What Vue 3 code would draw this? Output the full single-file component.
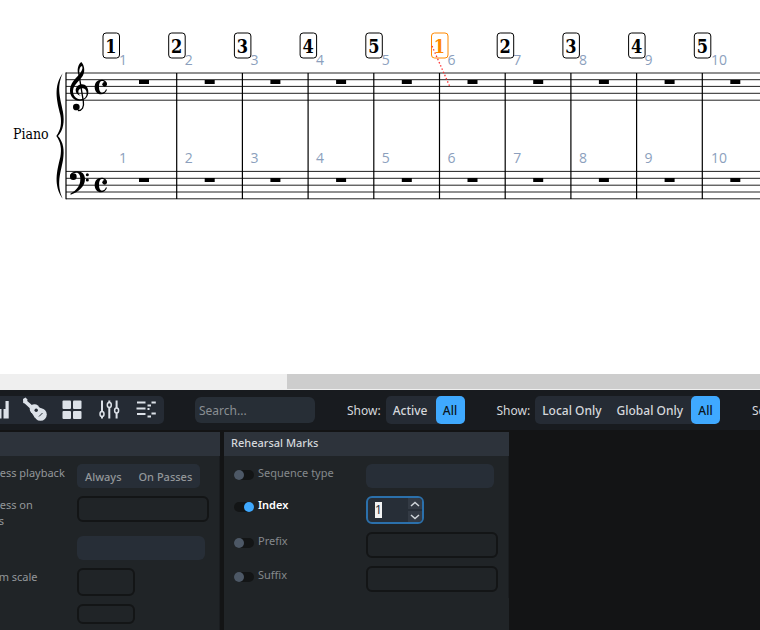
<script setup>
import { onMounted, ref } from 'vue'

const FIRST_BARLINE = 111
const BAR_WIDTH = 65.7

const trebleLines = [73, 79.7, 86.4, 93.3, 100.2]
const bassLines = [171.4, 178.3, 185.2, 192, 198.8]

const measures = Array.from({ length: 10 }, (_, i) => ({
  number: i + 1,
  mark: (i % 5) + 1,
  selected: i === 5,
  start: FIRST_BARLINE + i * BAR_WIDTH,
  center: 144 + i * BAR_WIDTH,
}))

const showActive = ref('All')
const showScope = ref('All')
const indexValue = ref('1')
const indexField = ref(null)

const properties = ref([
  { id: 'sequence', label: 'Sequence type', on: false, kind: 'select' },
  { id: 'index', label: 'Index', on: true, kind: 'number' },
  { id: 'prefix', label: 'Prefix', on: false, kind: 'text' },
  { id: 'suffix', label: 'Suffix', on: false, kind: 'text' },
])

function step(delta) {
  indexValue.value = String((Number(indexValue.value) || 0) + delta)
}

onMounted(() => {
  indexField.value?.[0]?.focus({ preventScroll: true })
  indexField.value?.[0]?.select()
})
</script>

<template>
  <main class="app">
    <section class="score" aria-label="Score">
      <svg class="staves" role="img" aria-label="Piano score">
        <g class="staff-line">
          <line v-for="y in [...trebleLines, ...bassLines]" :key="y" x1="66" x2="100%" :y1="y" :y2="y" />
        </g>
        <line class="barline" x1="66" x2="66" y1="72.5" y2="199.3" />

        <path
          transform="translate(0 20) scale(.33333)"
          d="M188 160C160 200 170 240 181 285C186 310 182 330 169 348C182 366 186 386 181 411C170 456 160 496 188 536C168 490 182 460 189 420C194 390 190 366 174 348C190 330 194 306 189 276C182 236 168 206 188 160Z"
        />
        <text class="instrument" x="13" y="139">Piano</text>

        <g transform="translate(50 60) scale(.33333)">
          <path
            d="M94 6C102 14 107 32 98 48C89 63 70 74 69 92C68 108 80 118 92 118C104 118 110 109 110 100C110 90 104 85 97 85C90 85 85 89 85 95C85 101 88 105 92 107C83 106 77 99 77 91C77 81 86 73 96 73C107 73 115 83 115 96C115 111 104 122 89 122C71 122 60 108 60 92C60 70 76 57 86 45C94 35 99 26 97 20C94 15 87 24 88 38L84 40C81 24 86 12 94 6Z"
          />
          <path class="stem" d="M86 38L100 124C103 142 96 152 84 152" />
          <circle cx="79" cy="141" r="10" />
        </g>
        <g transform="translate(50 150) scale(.33333)">
          <path
            d="M60 82C59 71 69 64 82 64C96 64 105 73 105 87C105 109 86 126 62 134L61 131C80 121 91 107 91 87C91 75 87 68 79 68C72 68 68 70 66 74Z"
          />
          <circle cx="70" cy="80" r="10" />
          <circle cx="112" cy="74" r="4.500" />
          <circle cx="112" cy="90" r="4.500" />
        </g>
        <g v-for="y in [60, 158]" :key="y" :transform="`translate(50 ${y}) scale(.33333)`">
          <path
            d="M171 89C168 97 162 103 153 103C142 103 134 94 134 81C134 68 142 59 154 59C164 59 171 65 171 73L165 68C162 63 158 62 155 63C149 64 147 71 147 81C147 91 150 98 156 98C162 98 166 94 168 88Z"
          />
          <circle cx="164" cy="73" r="7" />
        </g>

        <g v-for="m in measures" :key="m.number">
          <line v-if="m.number > 1" class="barline" :x1="m.start" :x2="m.start" y1="73" y2="199" />
          <rect :x="m.center - 5" y="80" width="10" height="4" />
          <rect :x="m.center - 5" y="178" width="10" height="4" />
          <g class="measure-number">
            <text :x="m.number === 10 ? 719 : m.center - 21" y="65">{{ m.number }}</text>
            <text :x="m.number === 10 ? 719 : m.center - 21" y="163">{{ m.number }}</text>
          </g>
          <g class="mark" :class="{ selected: m.selected }">
            <rect :x="m.start - 8" y="33" width="16.5" height="25" rx="3" />
            <text :x="m.start" y="53">{{ m.mark }}</text>
          </g>
        </g>
        <line class="attachment" x1="432" y1="46" x2="450" y2="87" />
      </svg>
    </section>

    <div class="scroll-track"><div class="scroll-thumb"></div></div>

    <header class="toolbar">
      <div class="group icons">
        <button type="button" aria-label="Keyboard">
          <svg viewBox="0 0 37 28"><path d="M16 13h6.500v9.500H16zM24.500 13H26.500V5h3.200v17.500H24.500z" /></svg>
        </button>
        <button type="button" aria-label="Fretboard">
          <svg viewBox="0 0 37 28">
            <path d="M7 3l2.500-1.500 2 2-.3 1.500 7 6-2.500 3-7-6.500-1.500-.5z" />
            <circle cx="18.500" cy="13" r="4.800" />
            <circle cx="24.500" cy="18.500" r="6.300" />
            <path d="M14 14l5 8 9-8-7-4z" />
            <circle class="cut" cx="20.200" cy="14.200" r="1.700" />
            <path class="cut-line" d="M23 20.500l3.500-3.500" />
          </svg>
        </button>
        <button type="button" aria-label="Drum pads">
          <svg viewBox="0 0 37 28">
            <rect x="9.500" y="4.500" width="8.500" height="8.500" rx="1" />
            <rect x="20" y="4.500" width="8.500" height="8.500" rx="1" />
            <rect x="9.500" y="15" width="8.500" height="8" rx="1" />
            <rect x="20" y="15" width="8.500" height="8" rx="1" />
          </svg>
        </button>
        <button type="button" aria-label="Mixer">
          <svg viewBox="0 0 37 28">
            <path class="wire" d="M12 4.500v18M19.300 4.500v18M26.600 4.500v18" />
            <ellipse class="knob" cx="12" cy="18" rx="2" ry="2.500" />
            <ellipse class="knob" cx="19.300" cy="9" rx="2" ry="2.500" />
            <ellipse class="knob" cx="26.600" cy="14.500" rx="2" ry="2.500" />
          </svg>
        </button>
        <button type="button" aria-label="Key editor">
          <svg viewBox="0 0 37 28">
            <path class="wire" d="M10 6.500h8.500M9.500 12.500h9M10 18h8.500M24.500 6.500h4.300M20.500 9.500h3.500M20.500 13h2M24.500 17.500h4.300M20.500 20.500h3.500" />
          </svg>
        </button>
      </div>

      <input class="search" type="search" placeholder="Search..." aria-label="Search" />

      <div class="filter">
        <span>Show:</span>
        <div class="group">
          <button
            v-for="o in ['Active', 'All']"
            :key="o"
            type="button"
            :class="{ on: showActive === o }"
            @click="showActive = o"
          >{{ o }}</button>
        </div>
      </div>
      <div class="filter">
        <span>Show:</span>
        <div class="group">
          <button
            v-for="o in ['Local Only', 'Global Only', 'All']"
            :key="o"
            type="button"
            :class="{ on: showScope === o }"
            @click="showScope = o"
          >{{ o }}</button>
        </div>
      </div>
      <div class="filter"><span>Scope:</span></div>
    </header>

    <div class="panels">
      <section class="panel scrolled">
        <h2></h2>
        <div class="body">
          <div class="row">
            <span></span>
            <span class="label">Suppress playback</span>
            <div class="group passes">
              <button type="button">Always</button>
              <button type="button">On Passes</button>
            </div>
          </div>
          <div class="row">
            <span></span>
            <label class="label narrow" for="passes">Suppress on passes</label>
            <input id="passes" class="field" type="text" />
          </div>
          <div class="row">
            <span></span>
            <span></span>
            <select class="field" aria-label="Type"></select>
          </div>
          <div class="row">
            <span></span>
            <label class="label" for="scale">Custom scale</label>
            <input id="scale" class="field short" type="text" />
          </div>
          <div class="row">
            <span></span>
            <span></span>
            <input class="field short low" type="text" aria-label="Value" />
          </div>
        </div>
      </section>

      <section class="panel">
        <h2>Rehearsal Marks</h2>
        <div class="body">
          <div v-for="p in properties" :key="p.id" class="row" :class="{ enabled: p.on }">
            <input v-model="p.on" class="toggle" type="checkbox" :aria-label="`Set ${p.label}`" />
            <label class="label" :for="p.id">{{ p.label }}</label>
            <select v-if="p.kind === 'select'" :id="p.id" class="field"></select>
            <div v-else-if="p.kind === 'number'" class="spin">
              <input :id="p.id" ref="indexField" v-model="indexValue" type="text" inputmode="numeric" />
              <div class="steps">
                <button type="button" aria-label="Increase" @click="step(1)">
                  <svg viewBox="0 0 10 6"><path d="M1 5L5 1.500l4 3.500" /></svg>
                </button>
                <button type="button" aria-label="Decrease" @click="step(-1)">
                  <svg viewBox="0 0 10 6"><path d="M1 1L5 4.500l4-3.500" /></svg>
                </button>
              </div>
            </div>
            <input v-else :id="p.id" class="field" type="text" />
          </div>
        </div>
      </section>
    </div>
  </main>
</template>

<style>
body {
  margin: 0;
  background: #131415;
}
</style>

<style scoped>
.app {
  display: flex;
  flex-direction: column;
  min-height: 100vh;
  overflow: hidden;
  background: #131415;
  color: #d5d8dc;
  font: 12px/16px "Noto Sans", "Open Sans", sans-serif;
}

button,
input,
select {
  box-sizing: border-box;
  margin: 0;
  padding: 0;
  border: 0;
  background: none;
  color: inherit;
  font: inherit;
  outline: none;
  appearance: none;
}

.score {
  background: #fff;
}

.staves {
  display: block;
  width: 100%;
  height: 374px;
  fill: #000;
}

.staff-line {
  stroke: #222;
  stroke-width: 1;
}

.barline {
  stroke: #000;
  stroke-width: 1.2;
}

.stem {
  fill: none;
  stroke: #000;
  stroke-width: 4;
}

.instrument {
  font: 14px "DejaVu Serif Condensed", "DejaVu Serif", serif;
}

.measure-number {
  fill: #8c9fbd;
  font: 14px "Open Sans", sans-serif;
  text-anchor: middle;
}

.mark {
  font: bold 18px "DejaVu Serif Condensed", "DejaVu Serif", serif;
  text-anchor: middle;
}

.mark rect {
  fill: none;
  stroke: #000;
}

.mark.selected {
  fill: #ff8800;
}

.mark.selected rect {
  stroke: #ff8800;
}

.attachment {
  stroke: #f33;
  stroke-width: 1.3;
  stroke-dasharray: 1.5 2;
}

.scroll-track {
  height: 16px;
  background: #efefef;
}

.scroll-thumb {
  height: 15px;
  margin-left: 287px;
  background: #cdcdcd;
}

.toolbar {
  display: flex;
  align-items: center;
  height: 40px;
  background: #181b1f;
  white-space: nowrap;
}

.group {
  display: flex;
  flex: none;
  gap: 1px;
  border-radius: 5px;
  background: #252b34;
}

.group button {
  height: 28px;
  padding: 2px 7px 0;
  border-radius: 5px;
  font-weight: 500;
  white-space: nowrap;
}

.group button.on {
  min-width: 29px;
  background: #3fa9ff;
  color: #0b1520;
}

.icons {
  gap: 0;
  margin-left: -21px;
}

.icons button {
  width: 37px;
  padding: 0;
}

.icons svg {
  display: block;
  width: 37px;
  height: 28px;
  fill: #dce1e8;
}

.icons .cut {
  fill: #252b34;
}

.icons .cut-line {
  stroke: #252b34;
}

.icons .wire {
  fill: none;
  stroke: #dce1e8;
  stroke-width: 2;
}

.icons .knob {
  fill: #252b34;
  stroke: #dce1e8;
  stroke-width: 1.5;
}

.search {
  flex: none;
  width: 120px;
  height: 26px;
  margin-left: 31px;
  padding: 0 4px;
  border-radius: 6px;
  background: #272e36;
}

.search::placeholder {
  color: #8a8e93;
}

.filter {
  display: flex;
  flex: none;
  align-items: center;
  gap: 5px;
  margin-left: 32px;
}

.filter span {
  padding-top: 2px;
}

.panels {
  display: flex;
  flex: 1;
  gap: 4px;
  padding-top: 2px;
  font-size: 11px;
}

.panel {
  flex: none;
  width: 285px;
  background: #202427;
}

.scrolled {
  margin-left: -65px;
}

h2 {
  box-sizing: border-box;
  height: 24px;
  margin: 0;
  padding: 3px 7px;
  background: #2d333b;
  font-size: 11px;
  font-weight: 500;
  line-height: 16px;
}

.body {
  display: flex;
  flex-direction: column;
  gap: 8px;
  padding: 8px 0 6px 10px;
  border-right: 1px solid #1a1d20;
}

.row {
  display: grid;
  grid-template-columns: 20px 100px 132px;
  column-gap: 4px;
  align-items: start;
}

.row > :nth-child(3) {
  margin-left: 4px;
}

.label {
  margin: 1px 0 -1px;
  color: #85898c;
}

.scrolled .label {
  color: #93979a;
  white-space: nowrap;
}

.scrolled .narrow {
  max-width: 90px;
  white-space: normal;
}

.enabled .label {
  color: #fff;
  font-weight: 600;
}

.toggle {
  display: flex;
  width: 20px;
  height: 10px;
  margin-top: 6px;
  border-radius: 5px;
  background: #131516;
}

.toggle::before {
  content: "";
  width: 10px;
  height: 10px;
  border-radius: 5px;
  background: #4d5866;
}

.toggle:checked {
  justify-content: flex-end;
}

.toggle:checked::before {
  background: #3fa9ff;
}

.field {
  width: 132px;
  height: 26px;
  border: 2px solid #131516;
  border-radius: 6px;
}

select.field {
  width: 128px;
  height: 24px;
  border: 0;
  background: #272e37;
}

.field.short {
  width: 58px;
  height: 28px;
}

.field.low {
  height: 20px;
}

.passes {
  justify-self: start;
  background: #272e37;
  color: #93979a;
}

.passes button {
  height: 24px;
  padding: 2px 8px 0;
}

.spin {
  display: flex;
  box-sizing: border-box;
  width: 58px;
  height: 28px;
  border: 2px solid #2b70ab;
  border-radius: 6px;
  background: #272e37;
  overflow: hidden;
}

.spin input {
  flex: 1;
  min-width: 0;
  padding-left: 7px;
  font-size: 12px;
}

.spin input::selection {
  background: #f2f2f2;
  color: #272e37;
}

.steps {
  display: flex;
  flex-direction: column;
  gap: 2px;
  width: 14px;
}

.steps button {
  display: flex;
  flex: 1;
  align-items: center;
  justify-content: center;
  background: #333a44;
}

.steps svg {
  width: 10px;
  height: 6px;
  fill: none;
  stroke: #d0d5da;
  stroke-width: 1.5;
}
</style>
